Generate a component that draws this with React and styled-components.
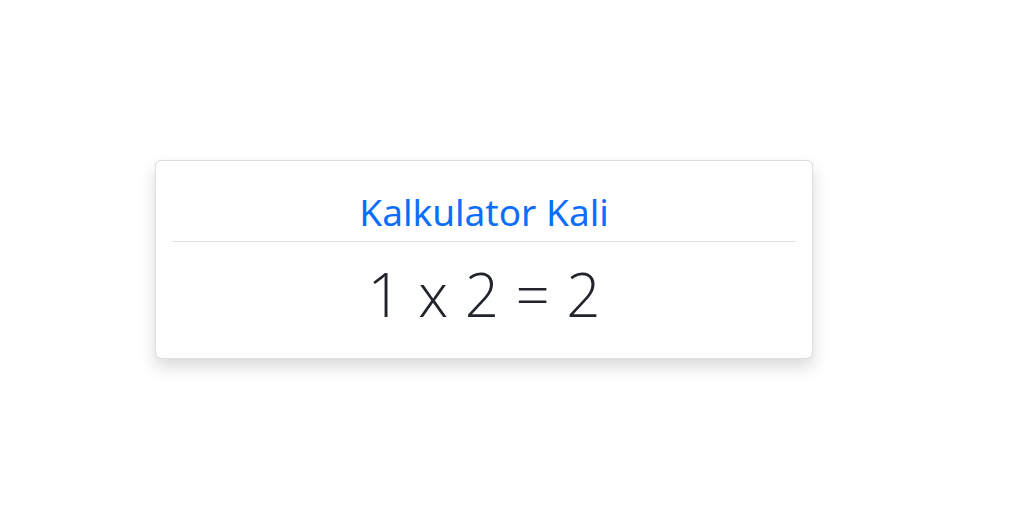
import React from "react";
import styled, { createGlobalStyle } from "styled-components";

const Global = createGlobalStyle`
  html, body { margin: 0; padding: 0; background: #fff; }
  body { font-family: "Noto Sans", "Open Sans", sans-serif; color: #212529; }
`;

const Page = styled.div`
  padding: 160px 0 140px 155px;
`;

const Card = styled.div`
  width: 658px;
  height: 199px;
  box-sizing: border-box;
  border: 1px solid rgba(0, 0, 0, 0.13);
  border-radius: 6px;
  background: #fff;
  box-shadow: 0 8px 16px rgba(0, 0, 0, 0.15);
  padding: 16px;
  display: flex;
  flex-direction: column;
  align-items: stretch;
`;

const Title = styled.h2`
  margin: 0;
  padding: 14px 0 8px;
  text-align: center;
  color: #0d6efd;
  font-family: "Noto Sans", sans-serif;
  font-weight: 400;
  font-size: 37px;
  line-height: 42px;
  border-bottom: 1px solid #dee2e6;
`;

const Equation = styled.div`
  padding-top: 12px;
  text-align: center;
  font-family: "Open Sans", sans-serif;
  font-weight: 300;
  font-size: 60px;
  line-height: 80px;
  color: #212529;
  word-spacing: 1px;
`;

export default function App() {
  return (
    <>
      <Global />
      <Page>
        <Card>
          <Title>Kalkulator Kali</Title>
          <Equation>1 x 2 = 2</Equation>
        </Card>
      </Page>
    </>
  );
}
